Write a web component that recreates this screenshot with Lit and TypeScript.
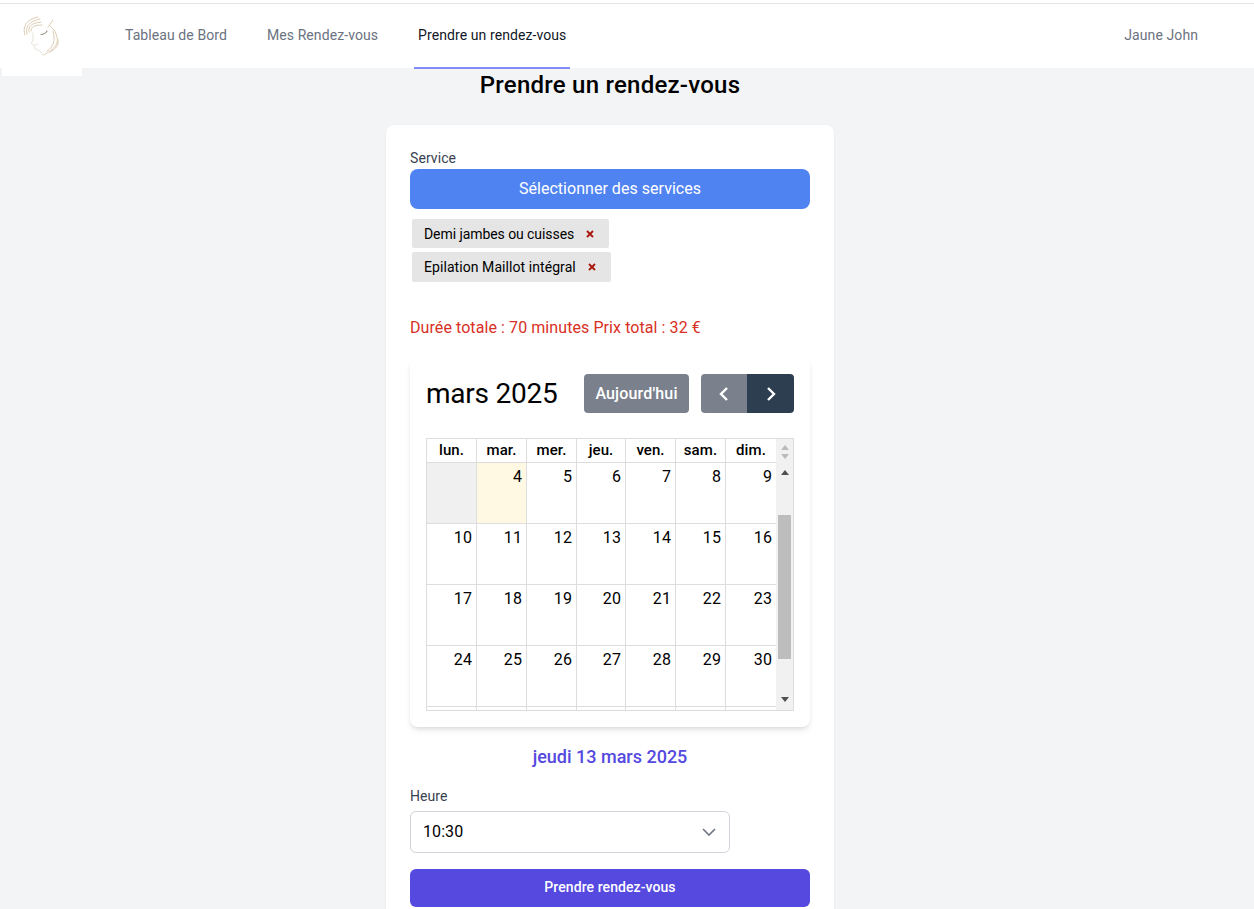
import { LitElement, html, css } from "lit";
import { customElement } from "lit/decorators.js";

// calendar rows for march 2025, null = day outside the month
const WEEKS: (number | null)[][] = [
  [null, 4, 5, 6, 7, 8, 9],
  [10, 11, 12, 13, 14, 15, 16],
  [17, 18, 19, 20, 21, 22, 23],
  [24, 25, 26, 27, 28, 29, 30],
];
const DAYS = ["lun.", "mar.", "mer.", "jeu.", "ven.", "sam.", "dim."];
const TAGS = ["Demi jambes ou cuisses", "Epilation Maillot intégral"];

@customElement("app-root")
export class AppRoot extends LitElement {
  static styles = css`
    :host {
      display: block;
      height: 909px;
      overflow: hidden;
      background: #f3f4f6;
      font-family: Roboto, "Noto Sans", sans-serif;
      letter-spacing: 0.005em;
      color: #000;
    }
    .topline {
      height: 3px;
      background: #fff;
      border-bottom: 1px solid #e5e5e5;
    }
    nav {
      height: 64px;
      background: #fff;
      display: flex;
      padding-right: 56px;
      position: relative;
    }
    .logo {
      position: absolute;
      left: 2px;
      top: 0;
      width: 80px;
      height: 72px;
      background: #fff;
    }
    .logo svg {
      display: block;
      margin: 12px 0 0 20px;
    }
    .links {
      display: flex;
      flex: 1;
      gap: 32px;
      padding-left: 121px;
    }
    .link {
      padding: 0 4px;
      font-size: 14px;
      letter-spacing: 0.006em;
      line-height: 62px;
      color: #6b7280;
      height: 65px;
      box-sizing: border-box;
    }
    .link.active {
      color: #111827;
      border-bottom: 2px solid #818cf8;
    }
    .user {
      font-size: 14px;
      letter-spacing: 0.006em;
      line-height: 62px;
      color: #6b7280;
    }
    main {
      width: 1220px;
    }
    h1 {
      margin: 0;
      padding-top: 1px;
      font-size: 24px;
      line-height: 32px;
      font-weight: 500;
      letter-spacing: 0.01em;
      text-align: center;
      color: #000;
    }
    .card {
      width: 400px;
      margin: 24px auto 0;
      padding: 24px;
      background: #fff;
      border-radius: 8px;
      box-shadow: 0 1px 3px rgba(0, 0, 0, 0.06);
    }
    label {
      display: block;
      font-size: 14px;
      line-height: 20px;
      color: #374151;
    }
    label.service {
      line-height: 18px;
      padding-bottom: 2px;
    }
    .services {
      height: 40px;
      background: #4f83f1;
      color: #fff;
      border-radius: 8px;
      font-size: 16px;
      letter-spacing: 0.002em;
      line-height: 40px;
      text-align: center;
    }
    .tags {
      display: flex;
      flex-direction: column;
      align-items: flex-start;
      gap: 4px;
      margin: 10px 0 0 2px;
    }
    .tag {
      display: flex;
      align-items: center;
      height: 29px;
      padding: 0 15px 0 12px;
      background: #e5e5e5;
      border-radius: 2px;
      font-size: 14px;
      letter-spacing: -0.005em;
      gap: 12px;
    }
    .tag:last-child {
      height: 30px;
      letter-spacing: 0.005em;
    }
    .tag svg {
      display: block;
    }
    .totals {
      margin-top: 35px;
      font-size: 16px;
      line-height: 22px;
      color: #d93025;
    }
    .calendar {
      margin-top: 19px;
      height: 369px;
      box-sizing: border-box;
      padding: 16px;
      border-radius: 8px;
      box-shadow: 0 4px 6px -1px rgba(0, 0, 0, 0.1), 0 2px 4px -2px rgba(0, 0, 0, 0.1);
    }
    .toolbar {
      display: flex;
      align-items: center;
      height: 39px;
      margin-bottom: 25px;
    }
    .title {
      flex: 1;
      font-size: 28px;
      letter-spacing: -0.008em;
      line-height: 39px;
    }
    .today,
    .nav-btn {
      height: 39px;
      display: flex;
      align-items: center;
      justify-content: center;
      color: #fff;
      background: #7b818c;
      font-size: 16px;
      font-weight: 500;
      letter-spacing: 0.01em;
    }
    .today {
      width: 105px;
      border-radius: 4px;
      margin-right: 12px;
    }
    .nav-btn {
      width: 46px;
      border-radius: 4px 0 0 4px;
    }
    .nav-btn.next {
      width: 47px;
      background: #2c3e50;
      border-radius: 0 4px 4px 0;
    }
    .table {
      width: 368px;
      box-sizing: border-box;
      border: 1px solid #ddd;
    }
    .head,
    .body {
      display: flex;
    }
    .cols {
      display: grid;
      grid-template-columns: 50px 50px 50px 49px 50px 50px 50px;
      width: 349px;
      flex: none;
    }
    .dayname {
      height: 23px;
      border-right: 1px solid #ddd;
      border-bottom: 1px solid #ddd;
      font-size: 15px;
      font-weight: 500;
      line-height: 23px;
      text-align: center;
    }
    .head .cols > :last-child {
      border-right: none;
    }
    .gutter {
      flex: 1;
      background: #f1f1f1;
      display: flex;
      flex-direction: column;
      align-items: center;
      gap: 4px;
      padding-top: 5px;
      box-sizing: border-box;
    }
    .body {
      height: 247px;
      overflow: hidden;
    }
    .cell {
      height: 61px;
      box-sizing: border-box;
      border-right: 1px solid #ddd;
      border-bottom: 1px solid #ddd;
      padding: 2px 4px 0 0;
      font-size: 16px;
      line-height: 24px;
      text-align: right;
    }
    .cols > .cell:nth-child(7n) {
      border-right: none;
    }
    .cell.other {
      background: #f0f0f0;
    }
    .cell.today-cell {
      background: #fff9e3;
    }
    .cell.tail {
      height: 3px;
      padding: 0;
      border-bottom: none;
    }
    .scrollbar {
      flex: 1;
      background: #f1f1f1;
      display: flex;
      flex-direction: column;
      align-items: center;
      height: 247px;
      box-sizing: border-box;
    }
    .thumb {
      width: 13px;
      height: 144px;
      margin-top: 40px;
      background: #bdbdbd;
    }
    .arrow-up {
      margin-top: 6px;
    }
    .arrow-down {
      margin-top: auto;
      margin-bottom: 7px;
    }
    .selected-date {
      margin-top: 20px;
      text-align: center;
      font-size: 18px;
      line-height: 20px;
      font-weight: 500;
      letter-spacing: 0;
      color: #5549e0;
    }
    .hour {
      margin-top: 19px;
    }
    .select {
      margin-top: 5px;
      width: 320px;
      height: 42px;
      box-sizing: border-box;
      border: 1px solid #d1d5db;
      border-radius: 6px;
      display: flex;
      align-items: center;
      justify-content: space-between;
      padding: 0 13px 1px 12px;
      font-size: 16px;
    }
    .submit {
      margin-top: 16px;
      height: 38px;
      background: #5549e0;
      color: #fff;
      border-radius: 6px;
      font-size: 14px;
      font-weight: 500;
      line-height: 37px;
      text-align: center;
    }
  `;

  private logo() {
    return html`<svg width="42" height="42" viewBox="0 0 42 42" fill="none" stroke-linecap="round">
      <g stroke="#dccdb4" stroke-width="1">
        <path d="M3 19C0 12 4 3 16 1" />
        <path d="M5 18C3 11 7 5 18 3" />
        <path d="M7 16C6 11 9 7 19 6" />
        <path d="M9 15C9 11 12 9 20 9" />
        <path d="M22 39C29 34 39 30 34 18C33 14 30 12 28 10" />
        <path d="M25 35C31 31 34 25 31 15" />
        <path d="M28 36C34 33 37 29 36 24" />
        <path d="M31 4L26 11" />
      </g>
      <g stroke="#e2dcd2" stroke-width="0.8">
        <path d="M11 17L11 25L9 27L12 29L13 33L18 35L21 39" />
        <path d="M13 29L16 28" />
      </g>
      <path d="M19 18.5C21 18.5 24 17 25 15" stroke="#8c857a" stroke-width="1.1" />
    </svg>`;
  }

  private closeIcon() {
    return html`<svg width="8" height="8" viewBox="0 0 8 8" stroke="#a8160c" stroke-width="1.8" fill="none">
      <path d="M1 1L7 7M7 1L1 7" />
    </svg>`;
  }

  private triangle(dir: "up" | "down", fill: string, cls = "") {
    const pts = dir === "up" ? "0,6 8,6 4,1" : "0,0 8,0 4,5";
    return html`<svg class=${cls} width="8" height="6" viewBox="0 0 8 6" fill=${fill}>
      <polygon points=${pts} />
    </svg>`;
  }

  private chevron(d: string) {
    return html`<svg width="12" height="16" viewBox="0 0 12 16" fill="none" stroke="#fff" stroke-width="2.4">
      <path d=${d} />
    </svg>`;
  }

  render() {
    return html`
      <div class="topline"></div>
      <nav>
        <div class="logo">${this.logo()}</div>
        <div class="links">
          <div class="link">Tableau de Bord</div>
          <div class="link">Mes Rendez-vous</div>
          <div class="link active">Prendre un rendez-vous</div>
        </div>
        <div class="user">Jaune John</div>
      </nav>
      <main>
        <h1>Prendre un rendez-vous</h1>
        <div class="card">
          <label class="service">Service</label>
          <div class="services">Sélectionner des services</div>
          <div class="tags">
            ${TAGS.map((t) => html`<div class="tag">${t}${this.closeIcon()}</div>`)}
          </div>
          <div class="totals">Durée totale : 70 minutes Prix total : 32 €</div>
          <div class="calendar">
            <div class="toolbar">
              <div class="title">mars 2025</div>
              <div class="today">Aujourd'hui</div>
              <div class="nav-btn">${this.chevron("M9 2L3 8L9 14")}</div>
              <div class="nav-btn next">${this.chevron("M3 2L9 8L3 14")}</div>
            </div>
            <div class="table">
              <div class="head">
                <div class="cols">
                  ${DAYS.map((d) => html`<div class="dayname">${d}</div>`)}
                </div>
                <div class="gutter">
                  ${this.triangle("up", "#bbb")} ${this.triangle("down", "#bbb")}
                </div>
              </div>
              <div class="body">
                <div class="cols">
                  ${WEEKS.flat().map((n, i) => {
                    const cls = n === null ? "cell other" : i === 1 ? "cell today-cell" : "cell";
                    return html`<div class=${cls}>${n ?? ""}</div>`;
                  })}
                  ${DAYS.map(() => html`<div class="cell tail"></div>`)}
                </div>
                <div class="scrollbar">
                  ${this.triangle("up", "#505050", "arrow-up")}
                  <div class="thumb"></div>
                  ${this.triangle("down", "#505050", "arrow-down")}
                </div>
              </div>
            </div>
          </div>
          <div class="selected-date">jeudi 13 mars 2025</div>
          <label class="hour">Heure</label>
          <div class="select">
            10:30
            <svg width="14" height="8" viewBox="0 0 14 8" fill="none" stroke="#6b7280" stroke-width="1.6">
              <path d="M1 1L7 7L13 1" />
            </svg>
          </div>
          <div class="submit">Prendre rendez-vous</div>
        </div>
      </main>
    `;
  }
}
